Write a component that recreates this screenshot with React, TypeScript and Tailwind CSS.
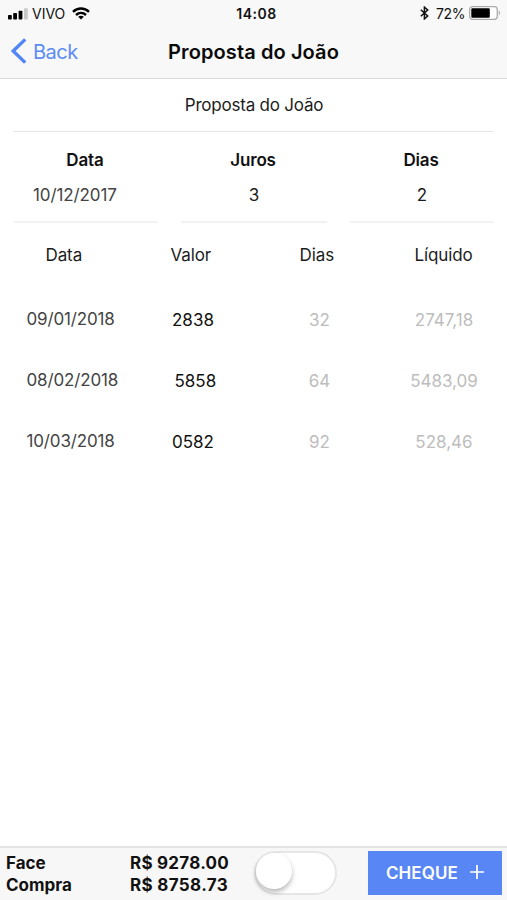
import { useState } from "react"

interface Cheque {
  data: string
  valor: string
  dias: string
  liquido: string
}

const CHEQUES: Cheque[] = [
  { data: "09/01/2018", valor: "2838", dias: "32", liquido: "2747,18" },
  { data: "08/02/2018", valor: "5858", dias: "64", liquido: "5483,09" },
  { data: "10/03/2018", valor: "0582", dias: "92", liquido: "528,46" },
]

function StatusBar() {
  return (
    <div className="grid h-7 grid-cols-[1fr_auto_1fr] items-center pl-2 pr-1.5 text-[14px] leading-7 text-[#111]">
      <div className="flex items-center">
        <svg width="20" height="12" viewBox="0 0 20 12" className="mr-1">
          <rect x="0" y="7" width="3.8" height="4.5" rx="0.8" fill="#000" />
          <rect x="5.2" y="5" width="3.8" height="6.5" rx="0.8" fill="#000" />
          <rect x="10.6" y="2.7" width="3.8" height="8.8" rx="0.8" fill="#000" />
          <rect x="16" y="0.3" width="3.8" height="11.2" rx="0.8" fill="#c8c8c8" />
        </svg>
        <span className="text-[14px]">VIVO</span>
        <svg width="18" height="13" viewBox="0 0 18 13" className="-mt-0.5 ml-[7px]" fill="none" stroke="#000" strokeWidth="2.4">
          <path d="M1 4.8C5.5 0.3 12.5 0.3 17 4.8" />
          <path d="M4 8C7 5.2 11 5.2 14 8" />
          <path d="M9 12.6L6.2 9.8C7.8 8.4 10.2 8.4 11.8 9.8Z" fill="#000" stroke="none" />
        </svg>
      </div>
      <span className="pl-1 text-[14px] font-semibold tracking-[0.5px]">14:08</span>
      <div className="flex items-center justify-end">
        <svg width="9" height="14" viewBox="0 0 9 14" fill="none" stroke="#111" strokeWidth="1.5" className="-mt-0.5 mr-[7px]">
          <path d="M0.8 3.8L7.7 10L4.4 12.9V1.1L7.7 4L0.8 10.2" />
        </svg>
        <span className="tracking-[-0.4px]">72%</span>
        <svg width="32" height="14" viewBox="0 0 32 14" className="-mt-0.5 ml-1">
          <rect x="0.7" y="0.7" width="27.6" height="12.6" rx="3" fill="#fff" stroke="#aaa" strokeWidth="1.3" />
          <rect x="2.3" y="2.3" width="18.5" height="9.4" rx="1.2" fill="#000" />
          <path d="M29.8 4.5C31.3 5.2 31.3 8.8 29.8 9.5Z" fill="#aaa" />
        </svg>
      </div>
    </div>
  )
}

function NavBar({ title }: { title: string }) {
  return (
    <div className="grid h-[47px] grid-cols-[1fr_auto_1fr] items-center px-[11px]">
      <button className="flex items-center text-[20px] tracking-[-0.5px] text-[#5b8cf7]">
        <svg width="16" height="26" viewBox="0 0 16 26" fill="none" stroke="#5285f5" strokeWidth="3.4" className="-mt-0.5 mr-[6px]">
          <path d="M14.2 1.4L2.2 13L14.2 24.6" />
        </svg>
        Back
      </button>
      <h1 className="text-[20px] font-semibold tracking-[0.1px] text-[#0a0a0a]">{title}</h1>
      <span />
    </div>
  )
}

function Field({ label, value, isDate }: { label: string; value: string; isDate?: boolean }) {
  return (
    <div className="border-b-2 border-[#f2f2f2] text-center">
      <div className="h-[35px] pr-0.5 font-semibold leading-[35px] tracking-[-0.15px] text-[#111]">{label}</div>
      {isDate ? (
        <div className="h-[43px] pl-[19px] text-left leading-[35px] tracking-[-0.1px] text-[#444]">{value}</div>
      ) : (
        <div className="h-[43px] leading-[35px] text-[#1c1c1c]">{value}</div>
      )}
    </div>
  )
}

function ChequeRow({ cheque }: { cheque: Cheque }) {
  return (
    <div className="grid h-[61px] grid-cols-[144px_100px_98px_151px] items-center even:[&>:nth-child(2)]:pl-1">
      <span className="-mt-0.5 tracking-[-0.15px] text-[#444]">{cheque.data}</span>
      <span className="pl-[1.5px] text-[#111]">{cheque.valor}</span>
      <span className="text-center text-[#bdbdbd]">{cheque.dias}</span>
      <span className="text-center text-[#bdbdbd]">{cheque.liquido}</span>
    </div>
  )
}

function Toggle() {
  const [on, setOn] = useState(false)
  return (
    <button
      role="switch"
      aria-checked={on}
      onClick={() => setOn(!on)}
      className={`-mt-0.5 flex h-11 w-[83px] items-center rounded-full border-2 border-[#e6e6e6] ${on ? "justify-end bg-[#5887f5]" : "bg-white"}`}
    >
      <span className="-mt-1 h-9 w-9 rounded-full bg-white shadow-[0_3px_5px_rgba(0,0,0,0.28)]" />
    </button>
  )
}

export default function App() {
  return (
    <div className="flex h-[900px] w-[507px] flex-col bg-white font-['Inter',sans-serif] text-[17px]">
      <header className="h-[79px] border-b border-[#dadada] bg-[#f8f8f8]">
        <StatusBar />
        <NavBar title="Proposta do João" />
      </header>

      <main className="flex-1">
        <div className="ml-[14px] mr-[13px] h-[53px] border-b border-[#e6e6e6] text-center leading-[52px] tracking-[-0.22px] text-[#1c1c1c]">
          Proposta do João
        </div>

        <div className="ml-[14px] mr-[13px] mt-[11px] grid grid-cols-[144px_146px_144px] justify-between">
          <Field label="Data" value="10/12/2017" isDate />
          <Field label="Juros" value="3" />
          <Field label="Dias" value="2" />
        </div>

        <div className="mt-4 grid h-[34px] grid-cols-[125px_129px_115px_auto] items-center pl-[45.5px] tracking-[-0.1px] text-[#1c1c1c]">
          <span>Data</span>
          <span>Valor</span>
          <span>Dias</span>
          <span>Líquido</span>
        </div>

        <div className="mt-[17px] pl-[26.5px]">
          {CHEQUES.map((c) => (
            <ChequeRow key={c.data} cheque={c} />
          ))}
        </div>
      </main>

      <footer className="flex h-[54px] items-center border-t-2 border-[#e4e4e4] bg-[#f7f7f7] pl-1.5">
        <div className="-mt-px grid w-[248px] grid-cols-[124px_auto] font-bold leading-[22px] text-[#111]">
          <span>Face</span>
          <span className="tracking-[0.25px]">R$ 9278.00</span>
          <span>Compra</span>
          <span className="tracking-[0.35px]">R$ 8758.73</span>
        </div>
        <Toggle />
        <button className="-mt-0.5 ml-[31px] flex h-11 w-[134px] items-center justify-center bg-[#5887f5] font-semibold tracking-[0.1px] text-white">
          <span className="pt-0.5">CHEQUE</span>
          <svg width="14" height="14" viewBox="0 0 14 14" stroke="#fff" strokeWidth="1.7" className="-mt-0.5 ml-3">
            <path d="M7 0V14M0 7H14" />
          </svg>
        </button>
      </footer>
    </div>
  )
}
